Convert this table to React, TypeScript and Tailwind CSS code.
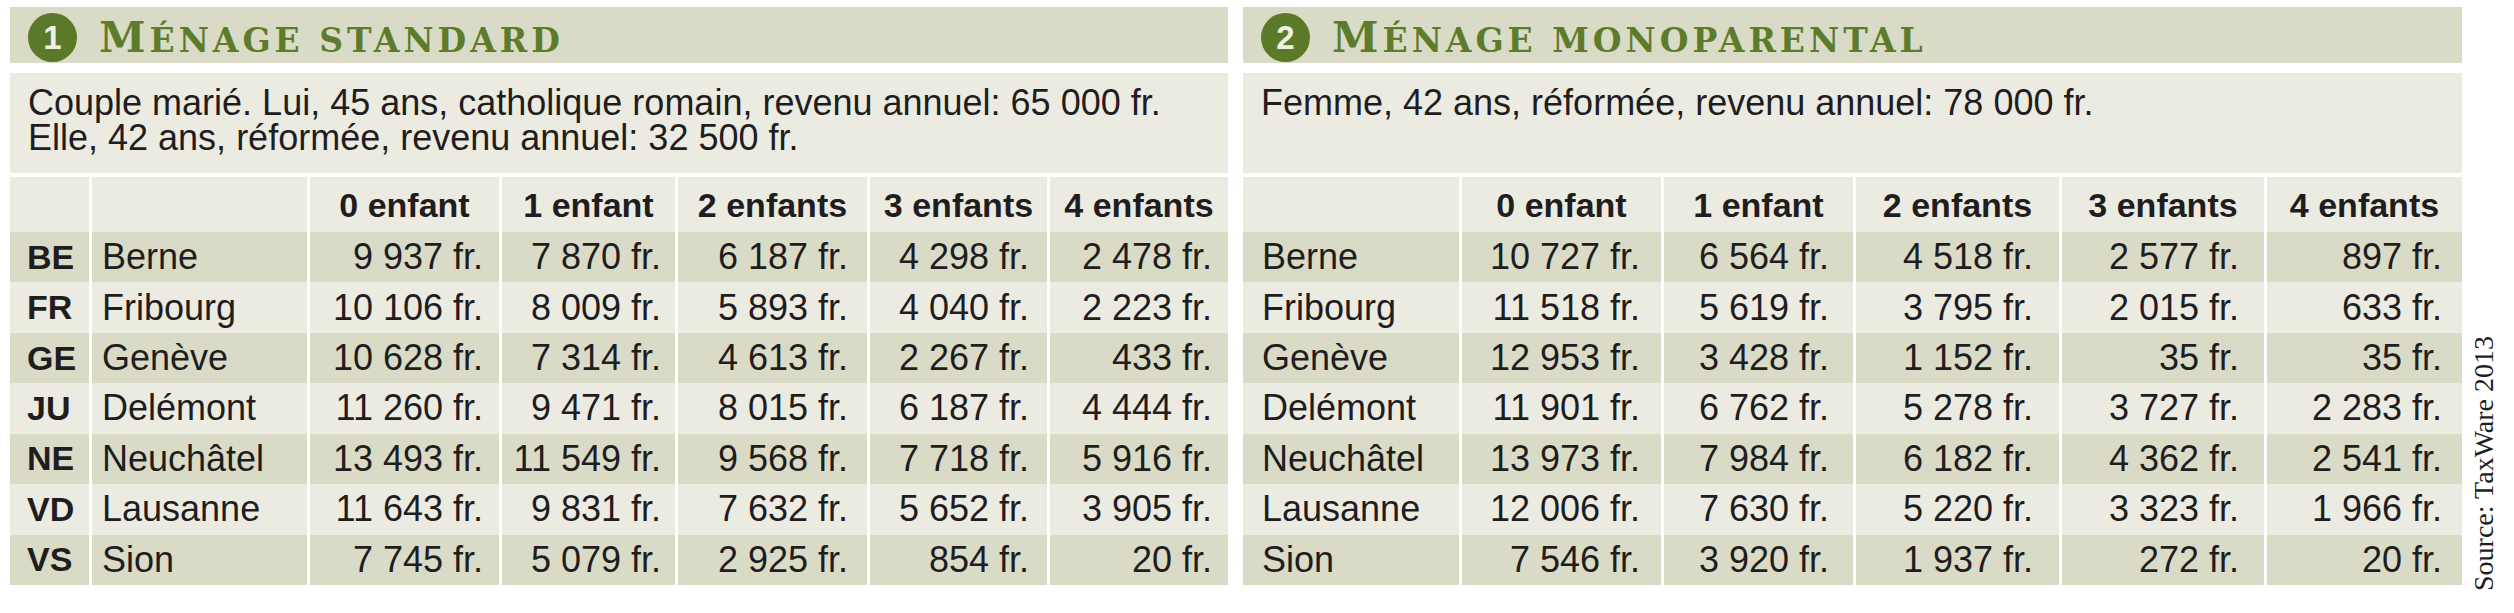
const HEADERS = ["0 enfant", "1 enfant", "2 enfants", "3 enfants", "4 enfants"];

const STANDARD_ROWS = [
  ["BE", "Berne", "9 937 fr.", "7 870 fr.", "6 187 fr.", "4 298 fr.", "2 478 fr."],
  ["FR", "Fribourg", "10 106 fr.", "8 009 fr.", "5 893 fr.", "4 040 fr.", "2 223 fr."],
  ["GE", "Genève", "10 628 fr.", "7 314 fr.", "4 613 fr.", "2 267 fr.", "433 fr."],
  ["JU", "Delémont", "11 260 fr.", "9 471 fr.", "8 015 fr.", "6 187 fr.", "4 444 fr."],
  ["NE", "Neuchâtel", "13 493 fr.", "11 549 fr.", "9 568 fr.", "7 718 fr.", "5 916 fr."],
  ["VD", "Lausanne", "11 643 fr.", "9 831 fr.", "7 632 fr.", "5 652 fr.", "3 905 fr."],
  ["VS", "Sion", "7 745 fr.", "5 079 fr.", "2 925 fr.", "854 fr.", "20 fr."],
];

const MONO_ROWS = [
  ["Berne", "10 727 fr.", "6 564 fr.", "4 518 fr.", "2 577 fr.", "897 fr."],
  ["Fribourg", "11 518 fr.", "5 619 fr.", "3 795 fr.", "2 015 fr.", "633 fr."],
  ["Genève", "12 953 fr.", "3 428 fr.", "1 152 fr.", "35 fr.", "35 fr."],
  ["Delémont", "11 901 fr.", "6 762 fr.", "5 278 fr.", "3 727 fr.", "2 283 fr."],
  ["Neuchâtel", "13 973 fr.", "7 984 fr.", "6 182 fr.", "4 362 fr.", "2 541 fr."],
  ["Lausanne", "12 006 fr.", "7 630 fr.", "5 220 fr.", "3 323 fr.", "1 966 fr."],
  ["Sion", "7 546 fr.", "3 920 fr.", "1 937 fr.", "272 fr.", "20 fr."],
];

const SANS = "font-['Liberation_Sans',Arial,sans-serif]";

function PanelTitle({ num, first, rest }: { num: string; first: string; rest: string }) {
  return (
    <div className="flex h-[56px] items-center bg-[#d9dbc6] pl-[18px] pt-[5px]">
      <div
        className={`flex h-[49px] w-[49px] items-center justify-center rounded-full bg-[#5a7a2a] text-[33px] font-bold leading-none text-[#eef0e4] ${SANS}`}
      >
        {num}
      </div>
      <div className="ml-[22px] font-['DejaVu_Serif',serif] font-bold leading-none tracking-[4px] text-[#5c7c2c]">
        <span className="text-[42px]">{first}</span>
        <span className="text-[33px] uppercase">{rest}</span>
      </div>
    </div>
  );
}

function Description({ lines }: { lines: string[] }) {
  return (
    <div className={`mt-[10px] h-[100px] bg-[#ecebe2] pl-[18px] pt-[12px] text-[36px] leading-[35px] text-[#1f1d1e] ${SANS}`}>
      {lines.map((l) => (
        <div key={l}>{l}</div>
      ))}
    </div>
  );
}

interface TableProps {
  cols: string;
  rows: string[][];
  labelCount: number;
  labelPads: string[];
  numPads: string[];
}

function DataTable({ cols, rows, labelCount, labelPads, numPads }: TableProps) {
  return (
    <div className={`mt-[4px] grid gap-x-[3px] ${cols} ${SANS} text-[#1f1d1e]`}>
      {/* header row */}
      {Array.from({ length: labelCount }).map((_, i) => (
        <div key={`e${i}`} className="h-[55px] bg-[#ecebe2]" />
      ))}
      {HEADERS.map((h) => (
        <div key={h} className="flex h-[55px] items-center justify-center bg-[#ecebe2] pt-[2px] text-[34px] font-bold">
          {h}
        </div>
      ))}

      {rows.map((row, r) => {
        const bg = r % 2 === 0 ? "bg-[#d9dbc6]" : "bg-[#ecebe2]";
        return row.map((cell, c) => {
          const isLabel = c < labelCount;
          const isCode = labelCount === 2 && c === 0;
          return (
            <div
              key={`${r}-${c}`}
              className={`flex h-[50.43px] items-center whitespace-nowrap ${bg} ${
                isLabel ? `justify-start ${labelPads[c]}` : `justify-end ${numPads[c - labelCount]}`
              } ${isCode ? "text-[34px] font-bold" : "text-[36px]"}`}
            >
              {cell}
            </div>
          );
        });
      })}
    </div>
  );
}

export default function App() {
  return (
    <div className="flex h-[613px] w-[2514px] items-stretch overflow-hidden bg-white pl-[10px] pt-[7px]">
      <div className="w-[1218px]">
        <PanelTitle num="1" first="M" rest="énage standard" />
        <Description
          lines={[
            "Couple marié. Lui, 45 ans, catholique romain, revenu annuel: 65 000 fr.",
            "Elle, 42 ans, réformée, revenu annuel: 32 500 fr.",
          ]}
        />
        <DataTable
          cols="grid-cols-[79px_215px_189px_173px_189px_177px_178px]"
          rows={STANDARD_ROWS}
          labelCount={2}
          labelPads={["pl-[17px]", "pl-[10px]"]}
          numPads={["pr-[16px]", "pr-[14px]", "pr-[19px]", "pr-[18px]", "pr-[16px]"]}
        />
      </div>

      <div className="ml-[15px] w-[1219px]">
        <PanelTitle num="2" first="M" rest="énage monoparental" />
        <Description lines={["Femme, 42 ans, réformée, revenu annuel: 78 000 fr."]} />
        <DataTable
          cols="grid-cols-[216px_199px_189px_203px_202px_195px]"
          rows={MONO_ROWS}
          labelCount={1}
          labelPads={["pl-[19px]"]}
          numPads={["pr-[21px]", "pr-[24px]", "pr-[26px]", "pr-[25px]", "pr-[20px]"]}
        />
      </div>

      <div className="ml-[8px] flex h-[585px] flex-col justify-end pb-[1px]">
        <span className="rotate-180 font-['Liberation_Serif',serif] text-[28px] leading-[28px] text-[#1f1d1e] [writing-mode:vertical-rl]">
          Source: TaxWare 2013
        </span>
      </div>
    </div>
  );
}
